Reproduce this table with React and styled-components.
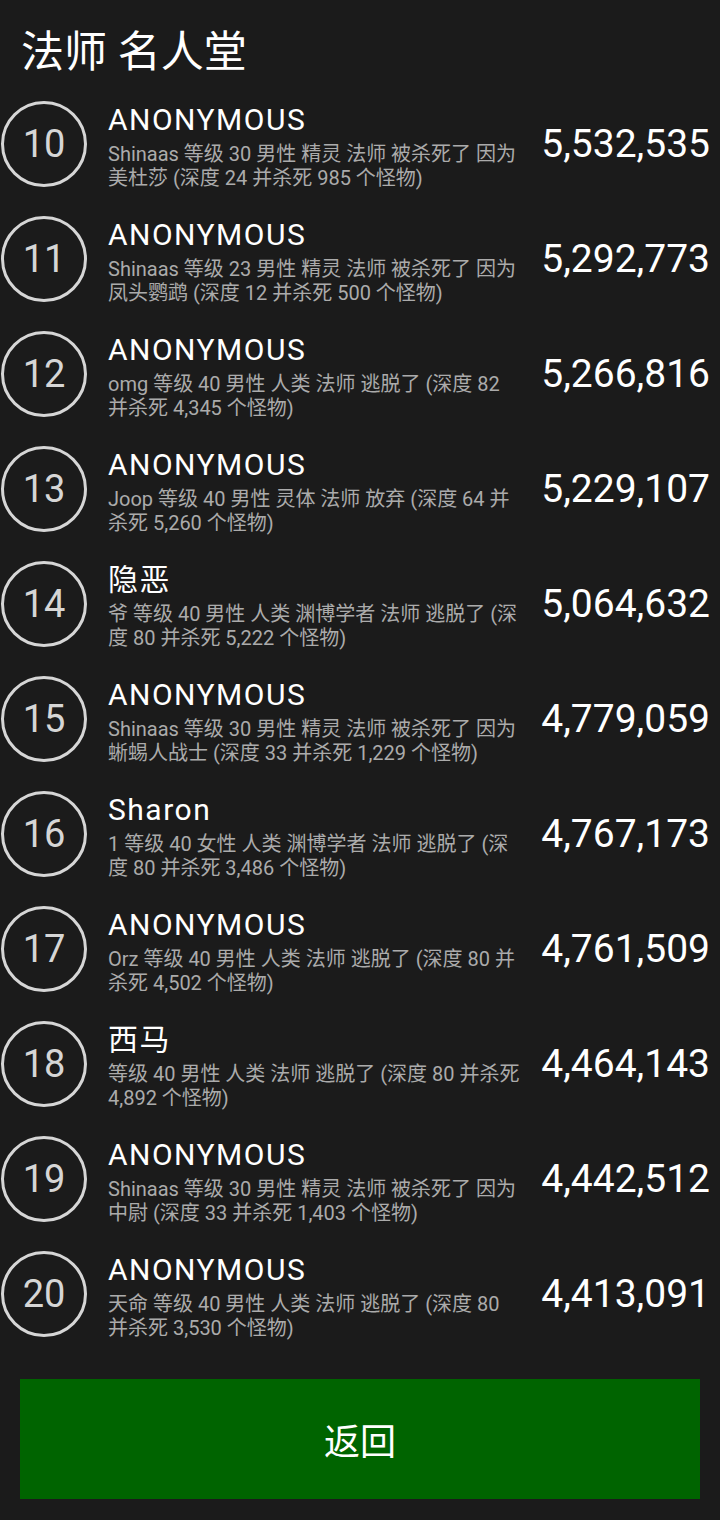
import React from "react";
import styled, { createGlobalStyle } from "styled-components";

const GlobalStyle = createGlobalStyle`
  html, body {
    margin: 0;
    padding: 0;
    background-color: #1b1b1b;
  }
  body {
    font-family: Roboto, "Noto Sans CJK SC", sans-serif;
    color: #fff;
  }
`;

const Page = styled.div`
  width: 720px;
  min-height: 1520px;
  box-sizing: border-box;
  background-color: #1b1b1b;
  padding-bottom: 20px;
`;

const Title = styled.h1`
  margin: 0;
  height: 86px;
  padding: 0 0 0 21px;
  box-sizing: border-box;
  font-size: 43px;
  font-weight: normal;
  line-height: 104px;
  color: #fff;
`;

const List = styled.div`
  display: flex;
  flex-direction: column;
`;

const Row = styled.div`
  display: flex;
  align-items: center;
  height: 115px;
  padding-left: 1px;
`;

const Rank = styled.div`
  flex: none;
  width: 86px;
  height: 86px;
  box-sizing: border-box;
  border: 3px solid #d6d6d6;
  border-radius: 50%;
  display: flex;
  align-items: center;
  justify-content: center;
  font-size: 38px;
  color: #d6d6d6;
`;

const Info = styled.div`
  flex: none;
  width: 414px;
  margin-left: 21px;
  display: flex;
  flex-direction: column;
`;

const Name = styled.div`
  font-size: 30px;
  line-height: 44px;
  letter-spacing: 1.5px;
  color: #fff;
`;

const Detail = styled.div`
  font-size: 20px;
  line-height: 24px;
  color: #ababab;
`;

const Score = styled.div`
  flex: 1;
  text-align: right;
  padding-right: 10px;
  font-size: 39px;
  color: #fff;
`;

const BackButton = styled.button`
  display: block;
  width: 680px;
  height: 120px;
  margin: 28px auto 0;
  border: none;
  background-color: #006400;
  color: #fff;
  font-family: Roboto, "Noto Sans CJK SC", sans-serif;
  font-size: 36px;
  cursor: pointer;
`;

const entries = [
  { rank: 10, name: "ANONYMOUS", detail: "Shinaas 等级 30 男性 精灵 法师 被杀死了 因为 美杜莎 (深度 24 并杀死 985 个怪物)", score: "5,532,535" },
  { rank: 11, name: "ANONYMOUS", detail: "Shinaas 等级 23 男性 精灵 法师 被杀死了 因为 凤头鹦鹉 (深度 12 并杀死 500 个怪物)", score: "5,292,773" },
  { rank: 12, name: "ANONYMOUS", detail: "omg 等级 40 男性 人类 法师 逃脱了 (深度 82 并杀死 4,345 个怪物)", score: "5,266,816" },
  { rank: 13, name: "ANONYMOUS", detail: "Joop 等级 40 男性 灵体 法师 放弃 (深度 64 并杀死 5,260 个怪物)", score: "5,229,107" },
  { rank: 14, name: "隐恶", detail: "爷 等级 40 男性 人类 渊博学者 法师 逃脱了 (深度 80 并杀死 5,222 个怪物)", score: "5,064,632" },
  { rank: 15, name: "ANONYMOUS", detail: "Shinaas 等级 30 男性 精灵 法师 被杀死了 因为 蜥蜴人战士 (深度 33 并杀死 1,229 个怪物)", score: "4,779,059" },
  { rank: 16, name: "Sharon", detail: "1 等级 40 女性 人类 渊博学者 法师 逃脱了 (深度 80 并杀死 3,486 个怪物)", score: "4,767,173" },
  { rank: 17, name: "ANONYMOUS", detail: "Orz 等级 40 男性 人类 法师 逃脱了 (深度 80 并杀死 4,502 个怪物)", score: "4,761,509" },
  { rank: 18, name: "西马", detail: "等级 40 男性 人类 法师 逃脱了 (深度 80 并杀死 4,892 个怪物)", score: "4,464,143" },
  { rank: 19, name: "ANONYMOUS", detail: "Shinaas 等级 30 男性 精灵 法师 被杀死了 因为 中尉 (深度 33 并杀死 1,403 个怪物)", score: "4,442,512" },
  { rank: 20, name: "ANONYMOUS", detail: "天命 等级 40 男性 人类 法师 逃脱了 (深度 80 并杀死 3,530 个怪物)", score: "4,413,091" },
];

function App() {
  return (
    <Page>
      <GlobalStyle />
      <Title>法师 名人堂</Title>
      <List>
        {entries.map((entry) => (
          <Row key={entry.rank}>
            <Rank>{entry.rank}</Rank>
            <Info>
              <Name>{entry.name}</Name>
              <Detail>{entry.detail}</Detail>
            </Info>
            <Score>{entry.score}</Score>
          </Row>
        ))}
      </List>
      <BackButton>返回</BackButton>
    </Page>
  );
}

export default App;
